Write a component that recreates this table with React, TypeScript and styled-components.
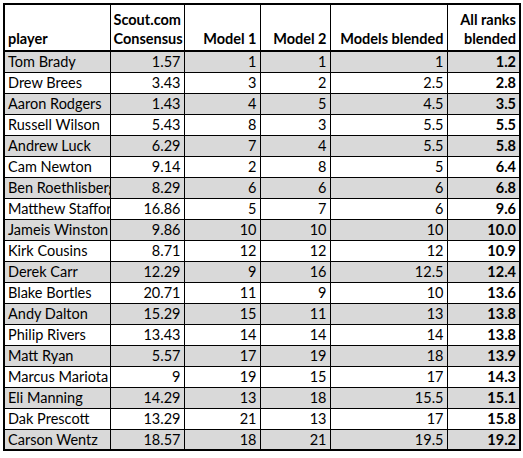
import styled, { createGlobalStyle } from "styled-components";

const GlobalStyle = createGlobalStyle`
  html, body {
    margin: 0;
    padding: 0;
    background: #ffffff;
  }
  body {
    font-family: Lato, "Open Sans", sans-serif;
  }
`;

const Page = styled.div`
  padding: 3px 0 0 3px;
`;

const Sheet = styled.table`
  border-collapse: collapse;
  table-layout: fixed;
  width: 516px;
  border: 2px solid #000;
  font-size: 14.5px;
  color: #000;
`;

const HeadRow = styled.tr`
  height: 47px;
  border-bottom: 2px solid #000;
`;

const HeadCell = styled.th<{ $left?: boolean }>`
  border-left: 1px solid #000;
  border-right: 1px solid #000;
  padding: 0 3px 2px 3px;
  vertical-align: bottom;
  text-align: ${(p) => (p.$left ? "left" : "right")};
  font-weight: bold;
  line-height: 19px;
`;

const Row = styled.tr<{ $shaded: boolean }>`
  height: 21px;
  background: ${(p) => (p.$shaded ? "#d9d9d9" : "#ffffff")};
`;

const Cell = styled.td<{ $left?: boolean; $bold?: boolean }>`
  border: 1px solid #000;
  padding: 0 3px;
  white-space: nowrap;
  overflow: hidden;
  text-overflow: clip;
  text-align: ${(p) => (p.$left ? "left" : "right")};
  font-weight: ${(p) => (p.$bold ? "bold" : "normal")};
  line-height: 19px;
`;

type Player = [string, string, string, string, string, string];

const rows: Player[] = [
  ["Tom Brady", "1.57", "1", "1", "1", "1.2"],
  ["Drew Brees", "3.43", "3", "2", "2.5", "2.8"],
  ["Aaron Rodgers", "1.43", "4", "5", "4.5", "3.5"],
  ["Russell Wilson", "5.43", "8", "3", "5.5", "5.5"],
  ["Andrew Luck", "6.29", "7", "4", "5.5", "5.8"],
  ["Cam Newton", "9.14", "2", "8", "5", "6.4"],
  ["Ben Roethlisberger", "8.29", "6", "6", "6", "6.8"],
  ["Matthew Stafford", "16.86", "5", "7", "6", "9.6"],
  ["Jameis Winston", "9.86", "10", "10", "10", "10.0"],
  ["Kirk Cousins", "8.71", "12", "12", "12", "10.9"],
  ["Derek Carr", "12.29", "9", "16", "12.5", "12.4"],
  ["Blake Bortles", "20.71", "11", "9", "10", "13.6"],
  ["Andy Dalton", "15.29", "15", "11", "13", "13.8"],
  ["Philip Rivers", "13.43", "14", "14", "14", "13.8"],
  ["Matt Ryan", "5.57", "17", "19", "18", "13.9"],
  ["Marcus Mariota", "9", "19", "15", "17", "14.3"],
  ["Eli Manning", "14.29", "13", "18", "15.5", "15.1"],
  ["Dak Prescott", "13.29", "21", "13", "17", "15.8"],
  ["Carson Wentz", "18.57", "18", "21", "19.5", "19.2"],
];

const widths = [106, 74, 76, 70, 117, 73];

export default function App() {
  return (
    <Page>
      <GlobalStyle />
      <Sheet>
        <colgroup>
          {widths.map((w, i) => (
            <col key={i} style={{ width: w }} />
          ))}
        </colgroup>
        <thead>
          <HeadRow>
            <HeadCell $left>player</HeadCell>
            <HeadCell>
              Scout.com
              <br />
              Consensus
            </HeadCell>
            <HeadCell>Model 1</HeadCell>
            <HeadCell>Model 2</HeadCell>
            <HeadCell>Models blended</HeadCell>
            <HeadCell>
              All ranks
              <br />
              blended
            </HeadCell>
          </HeadRow>
        </thead>
        <tbody>
          {rows.map((r, i) => (
            <Row key={r[0]} $shaded={i % 2 === 0}>
              <Cell $left>{r[0]}</Cell>
              <Cell>{r[1]}</Cell>
              <Cell>{r[2]}</Cell>
              <Cell>{r[3]}</Cell>
              <Cell>{r[4]}</Cell>
              <Cell $bold>{r[5]}</Cell>
            </Row>
          ))}
        </tbody>
      </Sheet>
    </Page>
  );
}
